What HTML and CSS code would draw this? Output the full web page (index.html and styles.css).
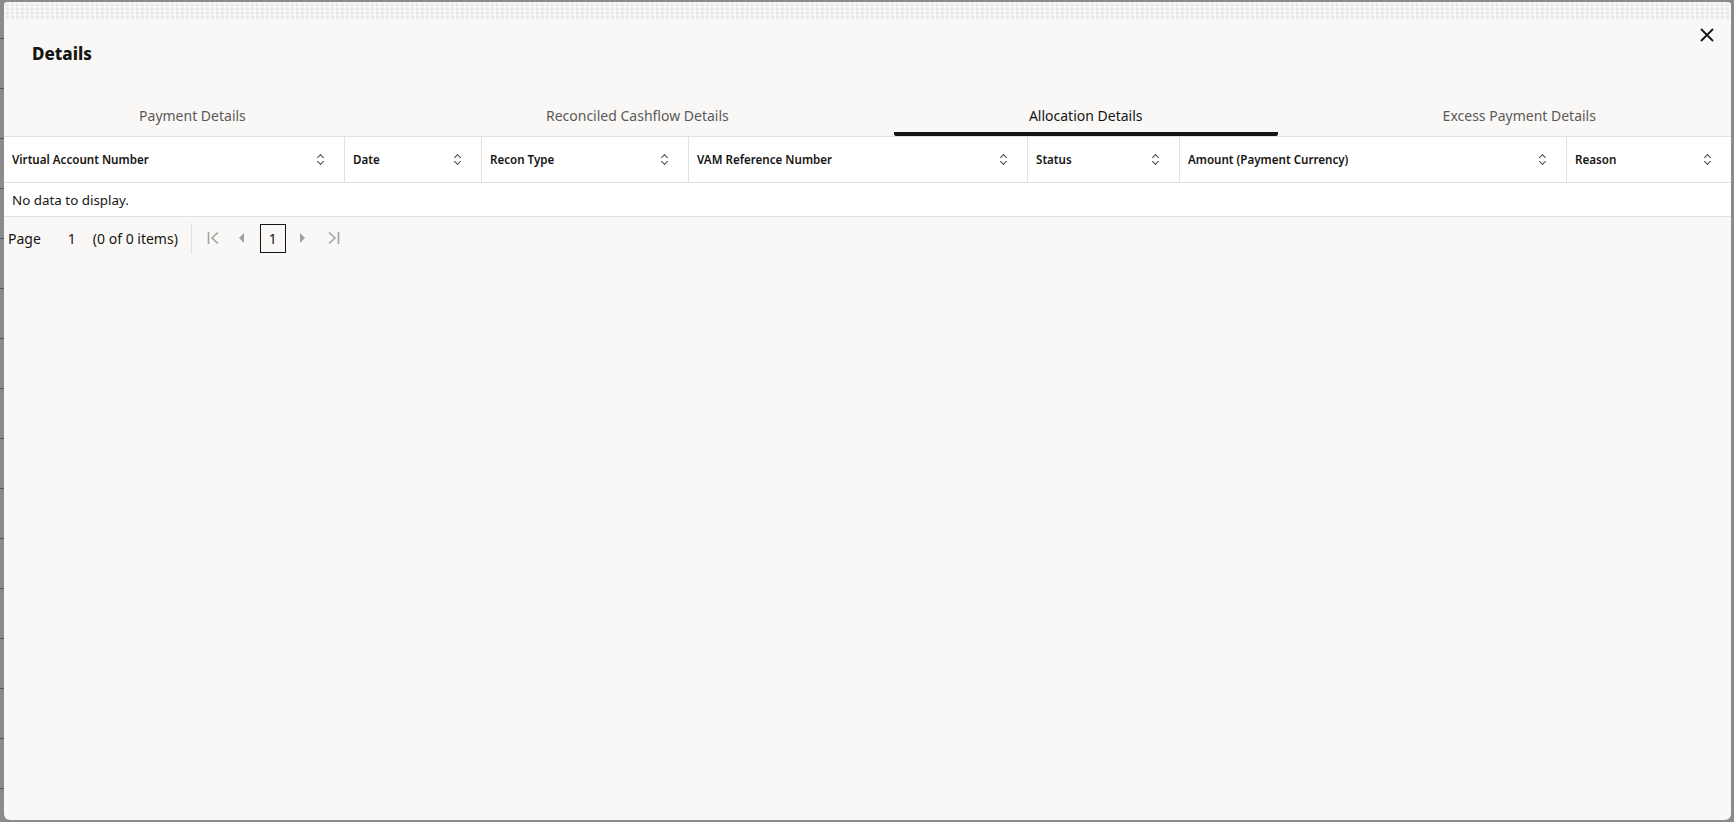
FILE: index.html
```html
<!DOCTYPE html>
<html lang="en">
<head>
  <meta charset="UTF-8" />
  <title>Details</title>
  <link rel="stylesheet" href="styles.css">
</head>
<body>

  <div class="backdrop-edge"></div>

  <div class="dialog">
    <div class="dialog-strip"></div>

    <header class="dialog-header">
      <h1>Details</h1>
      <button class="close-btn" aria-label="Close">
        <svg width="14" height="14" viewBox="0 0 14 14"><path d="M1 1 L13 13 M13 1 L1 13" stroke="#161513" stroke-width="1.8" fill="none"/></svg>
      </button>
    </header>

    <nav class="tabs">
      <div class="tab">Payment Details</div>
      <div class="tab">Reconciled Cashflow Details</div>
      <div class="tab active">Allocation Details</div>
      <div class="tab">Excess Payment Details</div>
    </nav>

    <div class="grid">
      <div class="grid-head">
        <div class="th">Virtual Account Number <span class="sort"></span></div>
        <div class="th">Date <span class="sort"></span></div>
        <div class="th">Recon Type <span class="sort"></span></div>
        <div class="th">VAM Reference Number <span class="sort"></span></div>
        <div class="th">Status <span class="sort"></span></div>
        <div class="th">Amount (Payment Currency) <span class="sort"></span></div>
        <div class="th">Reason <span class="sort"></span></div>
      </div>
      <div class="grid-empty">No data to display.</div>
    </div>

    <div class="pager">
      <span class="pager-label">Page</span>
      <span class="pager-num">1</span>
      <span class="pager-count">(0 of 0 items)</span>
      <span class="pager-sep"></span>
      <span class="pager-btn">
        <svg width="13" height="14" viewBox="0 0 13 14"><path d="M1.5 1 V13 M11 1.5 L5 7 L11 12.5" stroke="#a3a2a0" stroke-width="1.6" fill="none"/></svg>
      </span>
      <span class="pager-btn">
        <svg width="7" height="12" viewBox="0 0 7 12"><path d="M6 1 L1 6 L6 11 Z" fill="#a3a2a0"/></svg>
      </span>
      <span class="pager-page">1</span>
      <span class="pager-btn next">
        <svg width="7" height="12" viewBox="0 0 7 12"><path d="M1 1 L6 6 L1 11 Z" fill="#a3a2a0"/></svg>
      </span>
      <span class="pager-btn">
        <svg width="13" height="14" viewBox="0 0 13 14"><path d="M2 1.5 L8 7 L2 12.5 M11.5 1 V13" stroke="#a3a2a0" stroke-width="1.6" fill="none"/></svg>
      </span>
    </div>
  </div>

</body>
</html>
```

FILE: styles.css
```css
:root {
  --text: #161513;
  --muted: #5c5a58;
  --dialog-bg: #f9f8f6;
  --line: #e2e1df;
}

html, body {
  height: 100%;
}

body {
  margin: 0;
  padding: 2px 3px 2px 0;
  box-sizing: border-box;
  display: flex;
  background: #8c8b89;
  font-family: 'Noto Sans', 'Open Sans', sans-serif;
  color: var(--text);
  overflow: hidden;
}

.backdrop-edge {
  width: 4px;
  flex: none;
  background: repeating-linear-gradient(180deg, #8c8b89 0 36px, #3f5a73 36px 37px, #8c8b89 37px 50px);
}

.dialog {
  flex: 1;
  display: flex;
  flex-direction: column;
  background: var(--dialog-bg);
  border-radius: 4px 4px 6px 6px;
  overflow: hidden;
}

.dialog-strip {
  height: 18px;
  flex: none;
  background:
    repeating-linear-gradient(90deg, rgba(255,255,255,0.55) 0 2px, rgba(0,0,0,0.02) 2px 3px, transparent 3px 5px),
    repeating-linear-gradient(180deg, rgba(255,255,255,0.45) 0 2px, transparent 2px 4px),
    #eae9e7;
}

.dialog-header {
  display: flex;
  align-items: flex-start;
  justify-content: space-between;
  padding: 0 12px 0 28px;
  height: 78px;
}

.dialog-header h1 {
  margin: 22px 0 0;
  font-size: 17px;
  font-weight: 800;
  line-height: 24px;
}

.close-btn {
  margin-top: 3px;
  width: 24px;
  height: 24px;
  padding: 0;
  border: none;
  background: none;
  display: flex;
  align-items: center;
  justify-content: center;
  cursor: pointer;
}

.tabs {
  display: flex;
  gap: 30px;
  height: 38px;
  flex: none;
}

.tab {
  flex: 1 1 auto;
  display: flex;
  align-items: center;
  justify-content: center;
  padding-bottom: 4px;
  font-size: 14px;
  color: var(--muted);
  box-sizing: border-box;
}

.tab.active {
  color: var(--text);
  border-bottom: 4px solid var(--text);
  border-radius: 4px 4px 2px 2px;
  padding-bottom: 0;
}

.grid {
  background: #fff;
  border-top: 1px solid var(--line);
}

.grid-head {
  display: grid;
  grid-template-columns: 340px 137px 207px 339px 152px 387px 1fr;
  height: 45px;
  border-bottom: 1px solid var(--line);
}

.th {
  display: flex;
  align-items: center;
  justify-content: space-between;
  padding: 0 19px 0 8px;
  font-size: 11.6px;
  font-weight: 600;
  border-left: 1px solid var(--line);
}

.th:first-child {
  border-left: none;
}

.sort {
  width: 8px;
  height: 11px;
  position: relative;
}

.sort::before,
.sort::after {
  content: "";
  position: absolute;
  left: 1px;
  width: 4px;
  height: 4px;
  border-left: 1.3px solid #4a4947;
  border-top: 1.3px solid #4a4947;
}

.sort::before {
  top: 1px;
  transform: rotate(45deg);
}

.sort::after {
  bottom: 1px;
  transform: rotate(-135deg);
}

.grid-empty {
  height: 33px;
  display: flex;
  align-items: center;
  padding-left: 8px;
  font-size: 13.4px;
  border-bottom: 1px solid var(--line);
}

.pager {
  display: flex;
  align-items: center;
  height: 42px;
  padding-left: 4px;
  font-size: 14px;
}

.pager-num {
  margin-left: 27px;
}

.pager-count {
  margin-left: 17px;
}

.pager-sep {
  width: 1px;
  height: 31px;
  background: var(--line);
  margin: 0 12px 0 13px;
}

.pager-btn {
  width: 20px;
  display: flex;
  justify-content: center;
  margin-right: 8px;
}

.pager-btn.next {
  margin-right: 11px;
}

.pager-page {
  width: 24px;
  height: 27px;
  border: 1px solid var(--text);
  display: flex;
  align-items: center;
  justify-content: center;
  margin-right: 7px;
}
```
